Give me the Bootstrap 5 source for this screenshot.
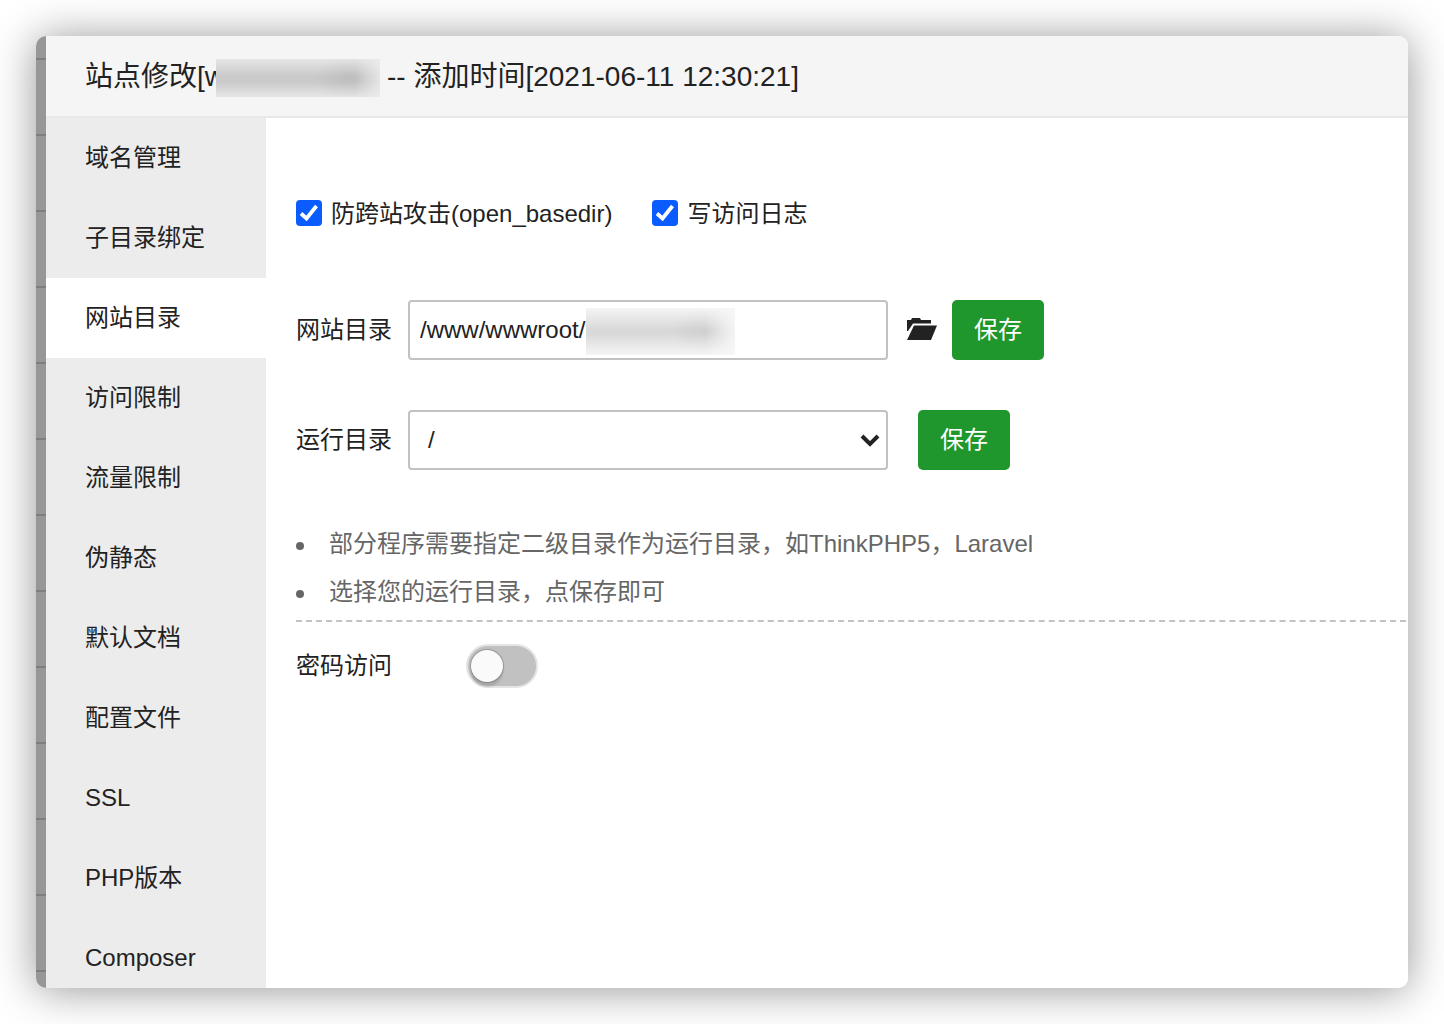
<!DOCTYPE html>
<html lang="zh-CN">
<head>
<meta charset="utf-8">
<meta name="viewport" content="width=device-width, initial-scale=1">
<title>站点修改</title>
<link href="https://cdn.jsdelivr.net/npm/bootstrap@5.3.0/dist/css/bootstrap.min.css" rel="stylesheet">
<style>
  body { font-family: "Liberation Sans", "Noto Sans CJK SC", sans-serif; font-size: 24px; line-height: 32px; color: #222; background: #fff; }
  .stage { padding: 36px; }
  .win { border-radius: 10px; box-shadow: 0 2px 44px rgba(0,0,0,.42); }
  .backdrop-strip { width: 10px; background: repeating-linear-gradient(to bottom, #979797 0 22px, #7e7e7e 22px 24px, #979797 24px 76px); }
  .win-head { height: 82px; padding: 2px 40px 0 39px; background: #f5f5f5; border-bottom: 2px solid #e8e8e8; }
  .win-head h1 { font-size: 28px; line-height: 38px; font-weight: 400; }
  .masked-title { width: 164px; height: 38px; margin: 2px 7px 0 -9px; background: linear-gradient(to right, transparent 85%, rgba(236,236,236,.8)), radial-gradient(ellipse 36px 24px at 82% 50%, rgba(0,0,0,.06), transparent), linear-gradient(to bottom, #e6e6e6, #cacaca 45%, #cacaca 60%, #e6e6e6); }
  .side { width: 220px; background: #ececec; }
  .side a { display: block; height: 80px; line-height: 80px; padding-left: 39px; color: #222; text-decoration: none; }
  .side a.active { background: #fff; }
  .panel { padding: 80px 2px 0 30px; }
  .panel label, .hints li { white-space: nowrap; }
  .checks { height: 30px; margin-bottom: 72px; }
  .checks label { padding-top: 2px; margin: 0 40px 0 9px; }
  .checks .form-check-input { width: 26px; height: 26px; border: 0; border-radius: 4px; }
  .checks .form-check-input:checked { background: #0b5cff url("data:image/svg+xml,%3Csvg xmlns='http://www.w3.org/2000/svg' viewBox='0 0 26 26'%3E%3Cpath d='M5 13.500l5.500 5L20.500 6' fill='none' stroke='%23fff' stroke-width='3.800'/%3E%3C/svg%3E") center / 100% no-repeat; }
  .field-row { height: 60px; margin-bottom: 50px; }
  .field-label { width: 112px; }
  .field-box { width: 480px; }
  .field-box .form-control, .field-box .form-select { height: 60px; border: 2px solid #c2c2c2; border-radius: 4px; font-size: 24px; line-height: 32px; color: #222; padding: 0 10px; }
  .field-box .form-select { padding-left: 18px; background: #fff url("data:image/svg+xml,%3Csvg xmlns='http://www.w3.org/2000/svg' viewBox='0 0 20 14'%3E%3Cpath d='M2 3l8 8 8-8' fill='none' stroke='%23222' stroke-width='4'/%3E%3C/svg%3E") right 6px center / 20px 14px no-repeat; }
  .masked-path { left: 178px; top: 8px; width: 149px; height: 47px; background: linear-gradient(to right, transparent 80%, rgba(247,247,247,.9)), radial-gradient(ellipse 36px 22px at 80% 48%, rgba(0,0,0,.04), transparent), linear-gradient(to bottom, #f5f5f5, #d9d9d9 45%, #d9d9d9 55%, #f5f5f5); }
  .btn-save { width: 92px; height: 60px; padding: 0; font-size: 24px; color: #fff; background: #20972d; border: 0; border-radius: 5px; }
  .btn-save:hover { background: #1b8127; color: #fff; }
  .btn-folder { margin: 0 14px 2px 18px; line-height: 0; }
  .btn-side { margin-left: 30px; }
  .hints { line-height: 48px; color: #666; padding: 0 0 4px; border-bottom: 2px dashed #c2c2c2; }
  .hints li { display: flex; align-items: center; height: 48px; }
  .hints li::before { content: ""; width: 8px; height: 8px; margin: 4px 25px 0 0; border-radius: 50%; background: #666; flex: none; }
  .access { margin-top: 22px; }
  .access label { width: 170px; }
  .switch-box { width: 72px; height: 44px; appearance: none; margin: 0; padding: 4px 3px; border: 2px solid #e4e4e4; border-radius: 22px; background: #c1c1c1; }
  .switch-box::before { content: ""; display: block; width: 32px; height: 32px; border-radius: 50%; background: #fafafa; box-shadow: 0 0 1px 1px rgba(0,0,0,.22), 0 5px 2px rgba(0,0,0,.12); }
  .switch-box:checked { background: #20972d; }
  .switch-box:checked::before { margin-left: 30px; }
</style>
</head>
<body>
<div class="stage vh-100">
  <div class="win d-flex h-100 overflow-hidden">
    <div class="backdrop-strip flex-shrink-0"></div>
    <div class="d-flex flex-column flex-grow-1 bg-white">
      <header class="win-head d-flex align-items-center flex-shrink-0">
        <h1 class="d-flex align-items-center m-0 text-nowrap"><span>站点修改[w</span><span class="masked-title position-relative"></span><span>-- 添加时间[2021-06-11 12:30:21]</span></h1>
      </header>
      <div class="d-flex flex-grow-1 overflow-hidden">
        <nav class="side flex-shrink-0">
          <a href="#">域名管理</a>
          <a href="#">子目录绑定</a>
          <a href="#" class="active" aria-current="page">网站目录</a>
          <a href="#">访问限制</a>
          <a href="#">流量限制</a>
          <a href="#">伪静态</a>
          <a href="#">默认文档</a>
          <a href="#">配置文件</a>
          <a href="#">SSL</a>
          <a href="#">PHP版本</a>
          <a href="#">Composer</a>
        </nav>
        <main class="panel flex-grow-1">
          <div class="checks d-flex align-items-center">
            <input class="form-check-input m-0" type="checkbox" id="basedir" checked>
            <label for="basedir">防跨站攻击(open_basedir)</label>
            <input class="form-check-input m-0" type="checkbox" id="accesslog" checked>
            <label for="accesslog">写访问日志</label>
          </div>
          <div class="field-row d-flex align-items-center">
            <label class="field-label" for="sitepath">网站目录</label>
            <div class="field-box position-relative">
              <input class="form-control" type="text" id="sitepath" value="/www/wwwroot/">
              <span class="masked-path position-absolute"></span>
            </div>
            <button type="button" class="btn-folder btn p-0 border-0" aria-label="选择目录">
              <svg width="32" height="24" viewBox="0 0 32 24" fill="#222"><path d="M1 14V3H5L6 1H14L15 3H25V6.500H7L2 14z"/><path d="M8 8.500H31L25 23H1z"/></svg>
            </button>
            <button type="button" class="btn btn-save">保存</button>
          </div>
          <div class="field-row d-flex align-items-center">
            <label class="field-label" for="rundir">运行目录</label>
            <div class="field-box">
              <select class="form-select" id="rundir"><option>/</option></select>
            </div>
            <button type="button" class="btn btn-save btn-side">保存</button>
          </div>
          <ul class="hints list-unstyled m-0">
            <li><span>部分程序需要指定二级目录作为运行目录，如ThinkPHP5，Laravel</span></li>
            <li><span>选择您的运行目录，点保存即可</span></li>
          </ul>
          <div class="access d-flex align-items-center">
            <label for="pwd">密码访问</label>
            <input class="switch-box" type="checkbox" role="switch" id="pwd">
          </div>
        </main>
      </div>
    </div>
  </div>
</div>
<script src="https://cdn.jsdelivr.net/npm/bootstrap@5.3.0/dist/js/bootstrap.bundle.min.js"></script>
</body>
</html>
